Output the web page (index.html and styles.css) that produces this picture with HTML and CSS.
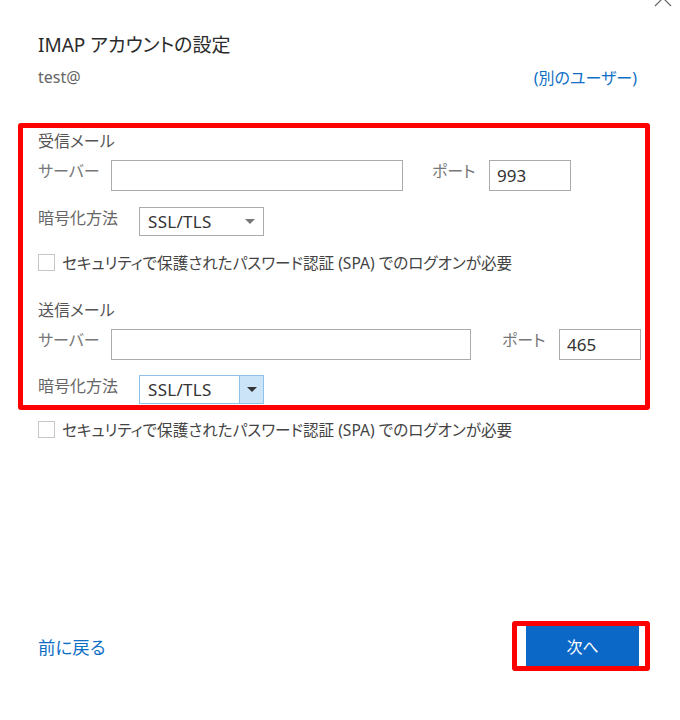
FILE: index.html
```
<!DOCTYPE html>
<html lang="ja">
<head>
    <meta charset="UTF-8">
    <title>IMAP アカウントの設定</title>
    <link rel="stylesheet" href="styles.css">
</head>
<body>
    <div class="dialog">
        <span class="close-btn">
            <svg width="18" height="18" viewBox="0 0 18 18"><path d="M1 1 L17 17 M17 1 L1 17" stroke="#666" stroke-width="1.2" fill="none"/></svg>
        </span>

        <h1 class="title">IMAP アカウントの設定</h1>
        <div class="account-row">
            <span class="account">test@</span>
            <a class="link" href="#">(別のユーザー)</a>
        </div>

        <div class="highlight">
            <div class="section-title">受信メール</div>
            <div class="row server-row">
                <label class="lbl lbl-server">サーバー</label>
                <input class="field server-in" type="text" value="">
                <label class="lbl lbl-port">ポート</label>
                <input class="field port-in" type="text" value="993">
            </div>
            <div class="row enc-row">
                <label class="lbl lbl-enc">暗号化方法</label>
                <div class="select">
                    <span class="select-text">SSL/TLS</span>
                    <span class="select-arrow">
                        <svg width="10" height="6" viewBox="0 0 10 6"><path d="M0 0 L10 0 L5 5 Z" fill="#777"/></svg>
                    </span>
                </div>
            </div>
            <div class="check-row">
                <span class="box"></span>
                <span class="check-text">セキュリティで保護されたパスワード認証 (SPA) でのログオンが必要</span>
            </div>

            <div class="section-title section-out">送信メール</div>
            <div class="row server-row">
                <label class="lbl lbl-server">サーバー</label>
                <input class="field server-in wide" type="text" value="">
                <label class="lbl lbl-port">ポート</label>
                <input class="field port-in" type="text" value="465">
            </div>
            <div class="row enc-row enc-out">
                <label class="lbl lbl-enc">暗号化方法</label>
                <div class="select focused">
                    <span class="select-text">SSL/TLS</span>
                    <span class="select-arrow">
                        <svg width="10" height="6" viewBox="0 0 10 6"><path d="M0 0 L10 0 L5 5 Z" fill="#333"/></svg>
                    </span>
                </div>
            </div>
        </div>

        <div class="check-row check-outside">
            <span class="box"></span>
            <span class="check-text">セキュリティで保護されたパスワード認証 (SPA) でのログオンが必要</span>
        </div>

        <div class="footer">
            <a class="link back" href="#">前に戻る</a>
            <div class="next-mark">
                <button class="next-btn">次へ</button>
            </div>
        </div>
    </div>
</body>
</html>
```

FILE: styles.css
```
body {
    margin: 0;
    background-color: #ffffff;
    font-family: "Noto Sans", "Noto Sans CJK JP", sans-serif;
    color: #333;
}
.dialog {
    position: relative;
    width: 680px;
    height: 720px;
    padding-top: 30px;
    box-sizing: border-box;
    overflow: hidden;
}
.close-btn {
    position: absolute;
    top: -11px;
    right: 8px;
}
.title {
    margin: 0 0 0 38px;
    font-size: 19px;
    font-weight: normal;
    line-height: 30px;
    color: #2b2b2b;
    font-feature-settings: "palt";
}
.account-row {
    display: flex;
    justify-content: space-between;
    align-items: center;
    margin: 4px 43px 0 38px;
    height: 26px;
}
.account {
    font-size: 16px;
    color: #666;
}
.link {
    color: #0f6fc6;
    text-decoration: none;
    font-size: 16px;
    font-feature-settings: "palt";
}
.highlight {
    margin: 33px 0 0 18px;
    width: 632px;
    height: 287px;
    border: 5px solid #f00;
    border-radius: 3px;
    padding: 2px 0 0 15px;
    box-sizing: border-box;
}
.section-title {
    font-size: 16px;
    line-height: 22px;
    color: #555;
    font-feature-settings: "palt";
}
.section-out {
    margin-top: 28px;
}
.row {
    display: flex;
    align-items: flex-start;
}
.server-row {
    margin-top: 8px;
}
.enc-row {
    margin-top: 16px;
}
.enc-out {
    margin-top: 15px;
}
.lbl {
    font-size: 16px;
    line-height: 22px;
    color: #777;
    font-feature-settings: "palt";
}
.lbl-server {
    width: 73px;
}
.lbl-enc {
    width: 101px;
    color: #666;
}
.lbl-port {
    width: 57px;
    margin-left: 29px;
}
.wide + .lbl-port {
    margin-left: 31px;
}
.field {
    height: 31px;
    border: 1px solid #ababab;
    box-sizing: border-box;
    padding: 0 7px;
    font-family: "Noto Sans", sans-serif;
    font-size: 17px;
    color: #333;
    outline: none;
}
.server-in {
    width: 292px;
}
.server-in.wide {
    width: 360px;
}
.port-in {
    width: 82px;
}
.select {
    display: flex;
    width: 125px;
    height: 29px;
    border: 1px solid #ababab;
    box-sizing: border-box;
}
.select-text {
    flex: 1;
    padding-left: 8px;
    font-size: 17px;
    line-height: 27px;
    letter-spacing: 0.3px;
    color: #333;
}
.select-arrow {
    width: 23px;
    display: flex;
    align-items: center;
    justify-content: center;
    padding-right: 2px;
}
.select.focused {
    border-color: #8fc1ea;
}
.select.focused .select-arrow {
    background-color: #cce4f7;
    border-left: 1px solid #8fc1ea;
    padding-right: 0;
}
.check-row {
    display: flex;
    align-items: center;
    margin-top: 18px;
    height: 17px;
}
.check-outside {
    margin: 11px 0 0 38px;
}
.box {
    width: 17px;
    height: 17px;
    border: 1px solid #c6c6c6;
    box-sizing: border-box;
    margin-right: 7px;
}
.check-text {
    font-size: 15.6px;
    color: #444;
    white-space: nowrap;
    font-feature-settings: "palt";
}
.footer {
    display: flex;
    justify-content: space-between;
    align-items: center;
    margin: 183px 30px 0 38px;
}
.back {
    font-size: 17.5px;
}
.next-mark {
    width: 138px;
    height: 50px;
    border: 5px solid #f00;
    border-radius: 3px;
    padding: 0 6px 0 9px;
    box-sizing: border-box;
    display: flex;
}
.next-btn {
    flex: 1;
    border: none;
    background-color: #0b68c7;
    color: #fff;
    font-family: "Noto Sans CJK JP", sans-serif;
    font-size: 16px;
    cursor: pointer;
}
```
